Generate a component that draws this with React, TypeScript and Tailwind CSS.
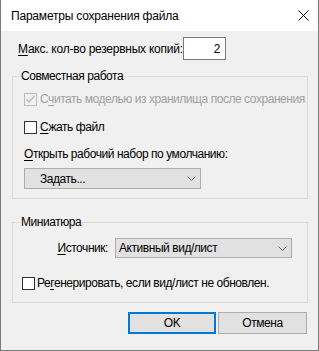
import type { ReactNode } from 'react';

const Chevron = () => (
  <svg width="9" height="5" viewBox="0 0 9 5" className="shrink-0">
    <path d="M0.5 0.5 L4.5 4.5 L8.5 0.5" fill="none" stroke="#606060" strokeWidth="1" />
  </svg>
);

type CheckProps = { checked?: boolean; disabled?: boolean };

const CheckBox = ({ checked, disabled }: CheckProps) => (
  <span
    className={
      disabled
        ? 'flex h-[13px] w-[13px] shrink-0 items-center justify-center border border-[#bcbcbc] bg-[#f0f0f0]'
        : 'flex h-[13px] w-[13px] shrink-0 items-center justify-center border border-[#333333] bg-white'
    }
  >
    {checked && (
      <svg width="11" height="11" viewBox="0 0 11 11">
        <path d="M1.5 5.5 L4 8 L9.5 2" fill="none" stroke={disabled ? '#bcbcbc' : '#000'} strokeWidth="1.3" />
      </svg>
    )}
  </span>
);

const U = ({ children }: { children: ReactNode }) => <span className="underline underline-offset-2">{children}</span>;

export default function App() {
  return (
    <div className='flex h-[351px] w-[319px] flex-col whitespace-nowrap border-x border-b border-[#7a7a7a] bg-[#f0f0f0] font-["Liberation_Sans",Arial,sans-serif] text-[12px] leading-[16px] tracking-[-0.45px] text-black'>
      <div className="flex h-[31px] shrink-0 items-center justify-between bg-white pl-[10px] pr-[9px] tracking-[-0.2px]">
        <span>Параметры сохранения файла</span>
        <svg width="11" height="11" viewBox="0 0 11 11">
          <path d="M0.5 0.5 L10.5 10.5 M10.5 0.5 L0.5 10.5" stroke="#000" strokeWidth="1" />
        </svg>
      </div>

      <div className="flex flex-1 flex-col pl-[11px] pr-[10px]">
        <div className="mt-[6px] flex items-center pl-[6px]">
          <span className="w-[165px] tracking-[-0.25px]">
            <U>М</U>акс. кол-во резервных копий:
          </span>
          <span className="flex h-[23px] w-[43px] items-center justify-end border border-[#7a7a7a] bg-white pr-[5px]">2</span>
        </div>

        <fieldset className="mt-[8px] border border-[#dcdcdc] pb-[9px] pl-[11px]">
          <legend className="ml-[-4px] px-[1px]">Совместная работа</legend>
          <div className="mt-[7px] flex h-[16px] items-center gap-[3px] text-[#a0a0a0]">
            <CheckBox checked disabled />
            <span>
              С<U>ч</U>итать моделью из хранилища после сохранения
            </span>
          </div>
          <div className="mt-[12px] flex h-[16px] items-center gap-[3px]">
            <CheckBox />
            <span>
              <U>С</U>жать файл
            </span>
          </div>
          <div className="mt-[11px]">
            <U>О</U>ткрыть рабочий набор по умолчанию:
          </div>
          <div className="mt-[6px] flex h-[21px] w-[177px] items-center justify-between border border-[#adadad] bg-[#e1e1e1] pl-[15px] pr-[4px]">
            <span>Задать...</span>
            <Chevron />
          </div>
        </fieldset>

        <fieldset className="mt-[15px] border border-[#dcdcdc] pb-[11px]">
          <legend className="ml-[7px] px-[1px]">Миниатюра</legend>
          <div className="mt-[8px] flex items-center">
            <span className="w-[95px] text-right">
              <U>И</U>сточник:
            </span>
            <div className="ml-[7px] flex h-[20px] w-[177px] items-center justify-between border border-[#adadad] bg-[#e1e1e1] pl-[3px] pr-[4px]">
              <span>Активный вид/лист</span>
              <Chevron />
            </div>
          </div>
          <div className="mt-[17px] flex h-[16px] items-center gap-[2px] pl-[9px]">
            <CheckBox />
            <span>
              Ре<U>г</U>енерировать, если вид/лист не обновлен.
            </span>
          </div>
        </fieldset>

        <div className="mt-[9px] flex justify-end gap-[2px] pr-[1px]">
          <button type="button" className="h-[22px] w-[88px] border-2 border-[#0078d7] bg-[#e1e1e1]">
            OK
          </button>
          <button type="button" className="h-[22px] w-[89px] border border-[#adadad] bg-[#e1e1e1]">
            Отмена
          </button>
        </div>
      </div>
    </div>
  );
}
